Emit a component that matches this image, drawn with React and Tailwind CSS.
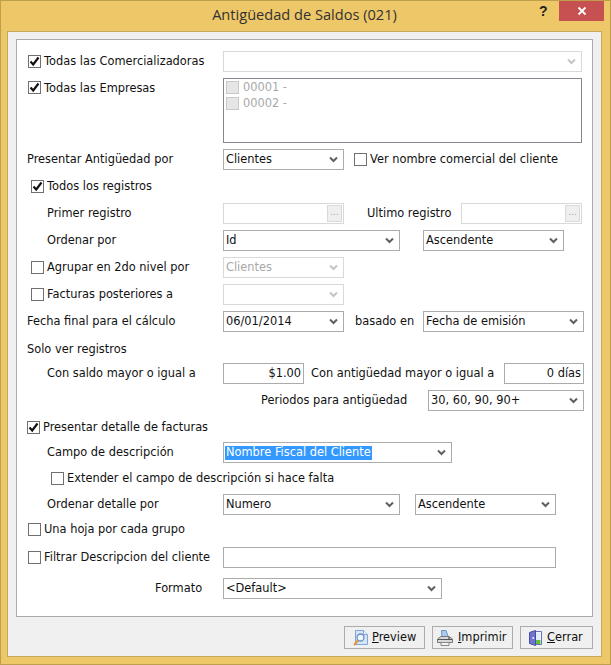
import React from 'react'

function Chevron({ off }) {
	return (
		<svg width="9" height="7" viewBox="0 0 9 7" className="shrink-0">
			<path d="M1 1.5 L4.5 5 L8 1.5" fill="none" stroke={off ? '#c4c4c4' : '#606060'} strokeWidth="2" />
		</svg>
	)
}

function Check({ on, className = '' }) {
	return (
		<span className={`w-[13px] h-[13px] border border-[#707070] bg-white flex items-center justify-center shrink-0 ${className}`}>
			{on && (
				<svg width="11" height="11" viewBox="0 0 11 11">
					<path d="M1.5 5.5 L4.2 8.5 L9.5 1.5" fill="none" stroke="#111" strokeWidth="2.1" />
				</svg>
			)}
		</span>
	)
}

function Select({ w, text, off, selected }) {
	return (
		<div className={`${w} h-[21px] shrink-0 border ${off ? 'border-[#d9d9d9] text-[#a8a8a8]' : 'border-[#ababab] text-[#111]'} bg-white flex items-center justify-between pl-[1px] pr-[5px]`}>
			<span className={selected ? 'bg-[#3399ff] text-white px-[1px] h-[14px] flex items-center' : 'px-[1px]'}>{text}</span>
			<Chevron off={off} />
		</div>
	)
}

function Lookup({ w }) {
	return (
		<div className={`${w} h-[21px] shrink-0 border border-[#d9d9d9] bg-white flex items-center justify-end pr-[1px]`}>
			<span className="w-[15px] h-[17px] border border-[#d9d9d9] bg-[#efefef] flex items-center justify-center text-[#a0a0a0] text-[9px] leading-none pb-[3px]">...</span>
		</div>
	)
}

function Row({ className = 'h-[21px]', children }) {
	return <div className={`flex items-center ${className}`}>{children}</div>
}

function Preview() {
	return (
		<svg width="15" height="16" viewBox="0 0 15 16" className="shrink-0">
			<path d="M2.5 .5 H10.5 L14.5 4.5 V14.5 H2.5 Z" fill="#d6e6fa" stroke="#7fa6d8" />
			<path d="M10.5 .5 V4.5 H14.5" fill="#f4f8fe" stroke="#7fa6d8" />
			<circle cx="7.5" cy="7.5" r="3.5" fill="#eef6ff" stroke="#6f8fb8" strokeWidth="1.3" />
			<path d="M5 10.5 L1 15" stroke="#e0963a" strokeWidth="2" />
		</svg>
	)
}

function Printer() {
	return (
		<svg width="16" height="16" viewBox="0 0 16 16" className="shrink-0">
			<path d="M4.5 .5 H9 L11.5 7.5 H5 Z" fill="#a9cdf2" stroke="#6e94bf" />
			<path d="M.5 9 L4 6.5 H12 L15.5 9 V12.5 H.5 Z" fill="#d9d9d9" stroke="#777" />
			<path d="M1 9.5 H15" stroke="#555" />
			<path d="M4 12.5 H12 V15.5 H4 Z" fill="#f5f5f5" stroke="#888" />
			<path d="M11 8 h2" stroke="#333" />
		</svg>
	)
}

function Door() {
	return (
		<svg width="13" height="16" viewBox="0 0 13 16" className="shrink-0">
			<path d="M5 1.5 H12.5 V14.5 H5 Z" fill="#ffffff" stroke="#6a6fc0" />
			<path d="M6 10 H11.5 V14 H6 Z" fill="#5cc23c" />
			<path d="M6 2.5 H11.5 V10 H6 Z" fill="#dff0f8" />
			<path d="M.5 2.5 L6.5 .5 V15.5 L.5 13.5 Z" fill="#6f74cf" stroke="#4a4ea0" />
			<rect x="3.5" y="7" width="1.5" height="2" fill="#e8e8ff" />
		</svg>
	)
}

function Btn({ w, pad, icon, first, rest, gap }) {
	return (
		<button type="button" className={`${w} ${pad} ${gap} h-[23px] border border-[#acacac] bg-[#f0f0f0] flex items-center text-[#111]`}>
			{icon}
			<span><span className="underline">{first}</span>{rest}</span>
		</button>
	)
}

function App() {
	return (
		<div className="w-[611px] h-[665px] bg-[#eec768] border border-[#bd9f4c] flex flex-col font-['DejaVu_Sans',sans-serif] text-[11.4px] text-[#111] overflow-hidden">
			<div className="h-[30px] relative flex justify-center pt-[3px] pr-[2px] font-['Open_Sans',sans-serif] text-[14.6px] leading-[20px] text-[#333]">
				Antigüedad de Saldos (021)
				<span className="absolute left-[538px] top-[2px] font-['Liberation_Sans',sans-serif] font-bold text-[14px] leading-[16px] text-[#222]">?</span>
				<span className="absolute left-[558px] top-0 w-[45px] h-[20px] bg-[#c75050] flex items-center justify-center">
					<svg width="10" height="10" viewBox="0 0 10 10"><path d="M1.5 1.5 L8.5 8.5 M8.5 1.5 L1.5 8.5" stroke="#fff" strokeWidth="1.8" /></svg>
				</span>
			</div>
			<div className="ml-[6px] mr-[8px] mb-[7px] flex-1 border border-[#c5a85a] bg-[#f0f0f0] px-[8px] pt-[7px]">
				<div className="h-[578px] border border-[#ababab] bg-white pt-[11px] flex flex-col gap-[6px]">
					<Row>
						<span className="w-[206px] flex items-center pl-[11px] gap-[3px]"><Check on />Todas las Comercializadoras</span>
						<Select w="w-[359px]" text="" off />
					</Row>
					<div className="flex h-[65px]">
						<span className="w-[206px] flex items-start pt-[2px] pl-[11px] gap-[3px]"><Check on className="mt-[1px]" />Todas las Empresas</span>
						<div className="w-[359px] border border-[#828790] bg-white pl-[2px] pt-[2px] text-[#a8a8a8] flex flex-col gap-[3px]">
							<div className="flex items-center gap-[4px] h-[13px]"><span className="w-[13px] h-[13px] border border-[#c8c8c8] bg-[#e6e6e6]" />00001 -</div>
							<div className="flex items-center gap-[4px] h-[13px]"><span className="w-[13px] h-[13px] border border-[#c8c8c8] bg-[#e6e6e6]" />00002 -</div>
						</div>
					</div>
					<Row>
						<span className="w-[206px] pl-[10px]">Presentar Antigüedad por</span>
						<Select w="w-[121px]" text="Clientes" />
						<Check className="ml-[10px] mr-[3px]" />Ver nombre comercial del cliente
					</Row>
					<Row>
						<span className="w-[206px] flex items-center pl-[14px] gap-[3px]"><Check on />Todos los registros</span>
					</Row>
					<Row>
						<span className="w-[206px] pl-[30px]">Primer registro</span>
						<Lookup w="w-[121px]" />
						<span className="w-[117px] pl-[23px]">Ultimo registro</span>
						<Lookup w="w-[121px]" />
					</Row>
					<Row>
						<span className="w-[206px] pl-[30px]">Ordenar por</span>
						<Select w="w-[177px]" text="Id" />
						<span className="w-[23px]" />
						<Select w="w-[141px]" text="Ascendente" />
					</Row>
					<Row>
						<span className="w-[206px] flex items-center pl-[14px] gap-[3px]"><Check />Agrupar en 2do nivel por</span>
						<Select w="w-[121px]" text="Clientes" off />
					</Row>
					<Row>
						<span className="w-[206px] flex items-center pl-[14px] gap-[3px]"><Check />Facturas posteriores a</span>
						<Select w="w-[121px]" text="" off />
					</Row>
					<Row>
						<span className="w-[206px] pl-[10px]">Fecha final para el cálculo</span>
						<Select w="w-[121px]" text="06/01/2014" />
						<span className="w-[79px] pl-[11px]">basado en</span>
						<Select w="w-[161px]" text="Fecha de emisión" />
					</Row>
					<Row className="h-[19px] pt-[4px]">
						<span className="pl-[10px]">Solo ver registros</span>
					</Row>
					<Row>
						<span className="w-[206px] pl-[30px]">Con saldo mayor o igual a</span>
						<div className="w-[81px] h-[21px] border border-[#ababab] flex items-center justify-end pr-[2px]">$1.00</div>
						<span className="w-[200px] pl-[7px]">Con antigüedad mayor o igual a</span>
						<div className="w-[80px] h-[21px] border border-[#ababab] flex items-center justify-end pr-[2px]">0 días</div>
					</Row>
					<Row>
						<span className="w-[411px] pl-[244px]">Periodos para antigüedad</span>
						<Select w="w-[156px]" text="30, 60, 90, 90+" />
					</Row>
					<Row className="h-[19px] pt-[2px]">
						<span className="flex items-center pl-[10px] gap-[3px]"><Check on />Presentar detalle de facturas</span>
					</Row>
					<Row>
						<span className="w-[206px] pl-[30px]">Campo de descripción</span>
						<Select w="w-[229px]" text="Nombre Fiscal del Cliente" selected />
					</Row>
					<Row className="h-[19px]">
						<span className="flex items-center pl-[34px] gap-[3px]"><Check />Extender el campo de descripción si hace falta</span>
					</Row>
					<Row>
						<span className="w-[206px] pl-[30px]">Ordenar detalle por</span>
						<Select w="w-[177px]" text="Numero" />
						<span className="w-[15px]" />
						<Select w="w-[141px]" text="Ascendente" />
					</Row>
					<Row className="h-[17px]">
						<span className="flex items-center pl-[11px] gap-[3px]"><Check />Una hoja por cada grupo</span>
					</Row>
					<Row className="h-[21px] mt-[3px]">
						<span className="w-[206px] flex items-center pl-[11px] gap-[3px]"><Check />Filtrar Descripcion del cliente</span>
						<div className="w-[333px] h-[21px] border border-[#ababab]" />
					</Row>
					<Row className="h-[21px] mt-[4px]">
						<span className="w-[206px] pl-[138px]">Formato</span>
						<Select w="w-[219px]" text="<Default>" />
					</Row>
				</div>
				<div className="flex justify-end gap-[7px] mt-[9px]">
					<Btn w="w-[81px]" pad="pl-[8px]" icon={<Preview />} first="P" rest="review" gap="gap-[4px]" />
					<Btn w="w-[81px]" pad="pl-[4px]" icon={<Printer />} first="I" rest="mprimir" gap="gap-[5px]" />
					<Btn w="w-[73px]" pad="pl-[8px]" icon={<Door />} first="C" rest="errar" gap="gap-[5px]" />
				</div>
			</div>
		</div>
	)
}

export default App
